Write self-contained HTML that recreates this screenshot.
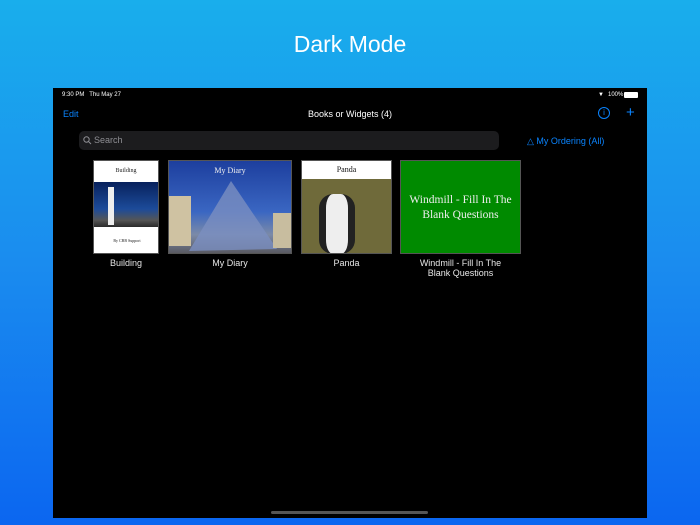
<!DOCTYPE html>
<html><head><meta charset="utf-8"><style>
*{margin:0;padding:0;box-sizing:border-box}
body{width:700px;height:525px;overflow:hidden;background:linear-gradient(180deg,#19aeec 0%,#1a8cef 50%,#0b66f0 100%);font-family:"Liberation Sans",sans-serif;position:relative}
.title{position:absolute;top:31px;left:0;width:700px;text-align:center;color:#fff;font-size:23px}
.scr{position:absolute;left:53px;top:88px;width:594px;height:430px;background:#000}
.a{position:absolute;color:#fff}
.blue{color:#0a84ff}
.card{position:absolute;top:72px;border:1px solid #555;overflow:hidden}
.lbl{position:absolute;top:170px;color:#e6e6e6;font-size:9px;text-align:center;line-height:10px}
.serif{font-family:"Liberation Serif",serif}
</style></head><body>
<div class="title">Dark Mode</div>
<div class="scr">
<div class="a" style="left:9px;top:4px;font-size:6px">9:30 PM &nbsp; Thu May 27</div>
<div class="a" style="left:555px;top:4px;font-size:6px">100%</div>
<div class="a" style="left:571px;top:4px;width:14px;height:6px;background:#fff;border-radius:1px"></div>
<div class="a" style="left:545px;top:4px;font-size:6px">&#9660;</div>
<div class="a blue" style="left:10px;top:21px;font-size:9px">Edit</div>
<div class="a" style="left:0;width:594px;text-align:center;top:21px;font-size:9px">Books or Widgets (4)</div>
<div class="a blue" style="left:545px;top:19px;width:12px;height:12px;border:1px solid #0a84ff;border-radius:50%;font-size:8px;text-align:center;line-height:10px">i</div>
<div class="a blue" style="left:573px;top:16px;font-size:15px">+</div>
<div class="a" style="left:26px;top:43px;width:420px;height:19px;background:#1c1c1e;border-radius:5px;color:#8e8e93;font-size:9px;line-height:19px;padding-left:15px">Search</div>
<svg class="a" style="left:30px;top:48px" width="9" height="9"><circle cx="3.5" cy="3.5" r="2.7" stroke="#8e8e93" fill="none"/><path d="M5.5 5.5L8 8" stroke="#8e8e93"/></svg>
<div class="a blue" style="left:474px;top:48px;font-size:9px">&#9651; My Ordering (All)</div>
<div class="card" style="left:40px;width:66px;height:94px;background:#fff">
 <div class="serif" style="color:#222;font-size:6px;text-align:center;margin-top:7px">Building</div>
 <div style="position:absolute;top:21px;left:0;width:66px;height:45px;background:linear-gradient(180deg,#08215c,#1c4b9a 60%,#555 85%,#2a2a2a)">
  <div style="position:absolute;left:14px;top:5px;width:6px;height:38px;background:#eee"></div></div>
 <div class="serif" style="position:absolute;top:77px;width:66px;text-align:center;color:#222;font-size:4px">By CBB Support</div>
</div>
<div class="card" style="left:115px;width:124px;height:94px;background:linear-gradient(180deg,#1d3f9e,#3a66c2 55%,#7b8aa8 80%,#5a5a62)">
 <div class="serif" style="color:#eee;font-size:8px;text-align:center;margin-top:5px">My Diary</div>
 <svg style="position:absolute;left:0;top:0" width="124" height="94"><polygon points="20,90 62,20 108,88" fill="#7a8ec0" opacity=".8"/><rect x="0" y="35" width="22" height="50" fill="#cfc2a2"/><rect x="104" y="52" width="20" height="35" fill="#c8bd9f"/></svg>
</div>
<div class="card" style="left:248px;width:91px;height:94px;background:#6f6a3a">
 <div style="background:#fff;height:18px;color:#111;font-size:8px;text-align:center;line-height:18px" class="serif">Panda</div>
 <div style="position:absolute;left:17px;top:33px;width:36px;height:60px;border-radius:14px;background:#eee;border-left:7px solid #222;border-right:7px solid #222"></div>
</div>
<div class="card" style="left:347px;width:121px;height:94px;background:#008a00">
 <div class="serif" style="color:#eee;font-size:11.5px;text-align:center;margin-top:32px;line-height:15px">Windmill - Fill In The Blank Questions</div>
</div>
<div class="lbl" style="left:40px;width:66px">Building</div>
<div class="lbl" style="left:115px;width:124px">My Diary</div>
<div class="lbl" style="left:248px;width:91px">Panda</div>
<div class="lbl" style="left:347px;width:121px">Windmill - Fill In The<br>Blank Questions</div>
<div class="a" style="left:218px;top:423px;width:157px;height:3px;background:#555;border-radius:2px"></div>
</div>
</body></html>
